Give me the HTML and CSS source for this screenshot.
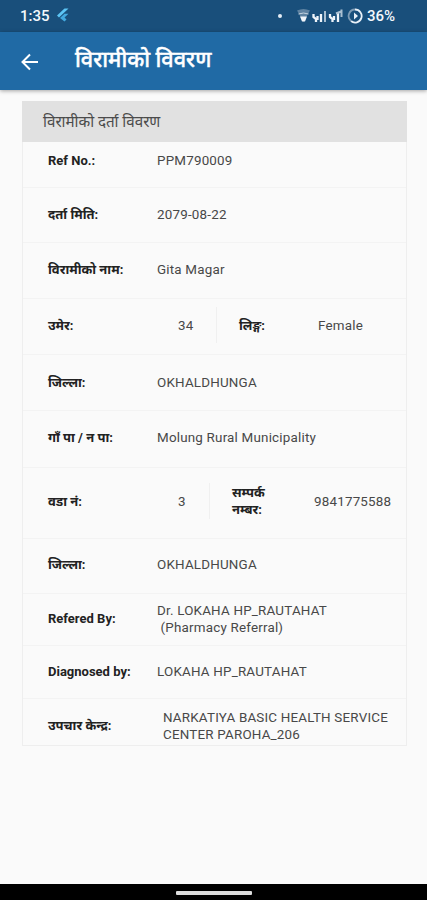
FILE: index.html
```html
<!DOCTYPE html>
<html lang="ne">
<head>
<meta charset="utf-8">
<title>विरामीको विवरण</title>
<link rel="stylesheet" href="styles.css">
</head>
<body>
<div class="status">
  <span class="time">1:35</span>
  <svg class="flutter" width="14" height="14" viewBox="0 0 14 14"><path d="M1 7.500 8.500 .5H12.500L3 9.500z" fill="#5cc5f5"/><path d="M4 10 8.500 5.800H12.500L8.500 9.500 10.500 11.500 8.500 13.500z" fill="#43a9df"/></svg>
  <span class="dot"></span>
  <svg class="signals" width="48" height="16" viewBox="0 0 48 16">
    <path d="M0 2.500Q6.500-.5 13 2.500L6.500 14z" fill="#5f83a2"/><path d="M3 8.500H10L8 13.500H5z" fill="#f0f5fa"/><path d="M1.500 6Q6.500 4 11.500 6" fill="none" stroke="#c4d3e0"/>
    <path d="M16.500 6v3l2.500 2v3M20.500 12V8M24 6v8M33 6v3l2.500 2v3M37 12V8M41 4v10" fill="none" stroke="#eef4fa" stroke-width="2.300"/>
    <path d="M28 3v11M44.500 1.500V9M39 5.500l5-2" fill="none" stroke="#a9bfd1" stroke-width="2"/>
  </svg>
  <svg class="saver" width="16" height="16" viewBox="0 0 16 16"><path d="M8 1.500A6.500 6.500 0 1 1 4 13" fill="none" stroke="#e9f1f8" stroke-width="1.800"/><path d="M4 13A6.500 6.500 0 0 1 8 1.500" fill="none" stroke="#7d9bb4" stroke-width="1.800"/><path d="M7 4.500v7L11 8z" fill="#e9f1f8"/></svg>
  <span class="percent">36%</span>
</div>
<header class="appbar">
  <svg class="back" width="18" height="18" viewBox="0 0 18 18"><path d="M17 9H2M9 1.500 1.500 9 9 16.500" fill="none" stroke="#fff" stroke-width="2"/></svg>
  <h1>विरामीको विवरण</h1>
</header>
<main>
  <section class="card">
    <h2>विरामीको दर्ता विवरण</h2>
    <div class="row first"><b>Ref No.:</b><span>PPM790009</span></div>
    <div class="row date"><b>दर्ता मिति:</b><span>2079-08-22</span></div>
    <div class="row name"><b>विरामीको नाम:</b><span>Gita Magar</span></div>
    <div class="row split age"><b>उमेर:</b><span>34</span><i></i><b>लिङ्ग:</b><span>Female</span></div>
    <div class="row"><b>जिल्ला:</b><span>OKHALDHUNGA</span></div>
    <div class="row local"><b>गाँ पा / न पा:</b><span>Molung Rural Municipality</span></div>
    <div class="row split ward"><b>वडा नं:</b><span>3</span><i></i><b>सम्पर्क<br>नम्बर:</b><span>9841775588</span></div>
    <div class="row district"><b>जिल्ला:</b><span>OKHALDHUNGA</span></div>
    <div class="row refer"><b>Refered By:</b><span>Dr. LOKAHA HP_RAUTAHAT<br>&nbsp;(Pharmacy Referral)</span></div>
    <div class="row diag"><b>Diagnosed by:</b><span>LOKAHA HP_RAUTAHAT</span></div>
    <div class="row center"><b>उपचार केन्द्र:</b><span>NARKATIYA BASIC HEALTH SERVICE CENTER PAROHA_206</span></div>
  </section>
</main>
<footer class="nav"><div class="pill"></div></footer>
</body>
</html>
```
FILE: styles.css
```css
* { box-sizing: border-box; }
body {
  margin: 0;
  height: 900px;
  display: flex;
  flex-direction: column;
  overflow: hidden;
  background: #fafafa;
  font-family: Roboto, "Noto Sans", sans-serif;
  color: #484848;
}
.status {
  flex: none;
  height: 32px;
  display: flex;
  align-items: center;
  padding-left: 20px;
  background: #194f7b;
  color: #f4f8fc;
  font-size: 15px;
  font-weight: 500;
}
.time { width: 30px; white-space: nowrap; }
.flutter { flex: none; margin: -3px 0 0 6px; }
.dot { flex: none; width: 4px; height: 4px; margin: 0 15px 0 208px; border-radius: 50%; background: #e4edf5; }
.signals { flex: none; }
.saver { flex: none; margin: 0 4px 0 2px; }
.percent { font-size: 15px; white-space: nowrap; }
.appbar {
  flex: none;
  height: 58px;
  display: flex;
  align-items: center;
  padding-left: 21px;
  background: #206aa5;
  box-shadow: 0 1px 4px rgba(0, 0, 0, .35);
}
.back { margin-top: 1px; }
h1 { margin: -3px 0 0 36px; color: #fff; font-size: 21.7px; font-weight: 500; line-height: 30px; white-space: nowrap; -webkit-text-stroke: .4px #fff; }
main { flex: 1; padding: 11px 20px 0 22px; }
.card { border: 1px solid #eee; border-top: 0; }
h2 {
  margin: 0 -1px;
  height: 41px;
  padding-left: 21px;
  background: #e1e1e1;
  color: #4b4b4b;
  font-size: 15.2px;
  font-weight: 400;
  line-height: 42px;
}
.row {
  height: 56px;
  display: grid;
  grid-template-columns: 109px 1fr;
  align-items: center;
  padding: 0 0 1px 25px;
  border-bottom: 1px solid #f3f3f3;
  font-size: 13.4px;
  line-height: 17px;
}
.row b { color: #222; font-size: 13px; font-weight: 700; white-space: nowrap; }
.row span { letter-spacing: .2px; }
.first { height: 46px; padding-bottom: 8px; }
.date { height: 55px; }
.name, .age { padding-bottom: 3px; }
.local { height: 57px; padding-bottom: 3px; }
.split { grid-template-columns: 130px 38px 23px 79px 1fr; }
.split i { width: 1px; height: 36px; background: #f0f0f0; }
.ward { height: 71px; padding-bottom: 4px; grid-template-columns: 130px 31px 23px 82px 1fr; }
.district { height: 55px; padding-bottom: 3px; }
.refer { height: 52px; padding-bottom: 2px; }
.diag { height: 53px; padding-bottom: 2px; }
.center { height: 46px; padding-top: 7px; padding-bottom: 0; grid-template-columns: 115px 1fr; border-bottom: 0; }
.nav { flex: none; height: 16px; display: flex; justify-content: center; background: #000; padding-top: 7px; }
.pill { width: 76px; height: 4px; border-radius: 1px; background: #ddd; }
```
